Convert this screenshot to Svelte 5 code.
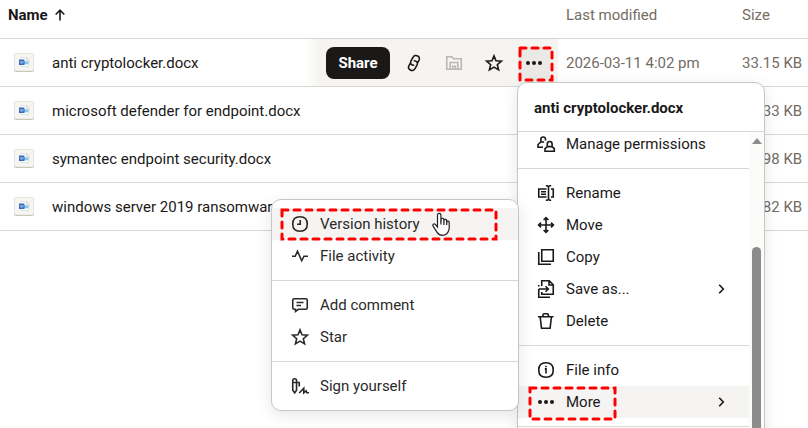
<script lang="ts">
  type Item = { icon: string; label: string; submenu?: boolean; active?: boolean };

  const files = [
    { name: "anti cryptolocker.docx", modified: "2026-03-11 4:02 pm", size: "33.15 KB", hovered: true },
    { name: "microsoft defender for endpoint.docx", modified: "", size: "34.33 KB" },
    { name: "symantec endpoint security.docx", modified: "", size: "32.98 KB" },
    { name: "windows server 2019 ransomware.docx", modified: "", size: "34.82 KB" },
  ];

  const menu: Item[][] = [
    [{ icon: "people", label: "Manage permissions" }],
    [
      { icon: "rename", label: "Rename" },
      { icon: "move", label: "Move" },
      { icon: "copy", label: "Copy" },
      { icon: "saveAs", label: "Save as...", submenu: true },
      { icon: "trash", label: "Delete" },
    ],
    [
      { icon: "info", label: "File info" },
      { icon: "dots", label: "More", submenu: true, active: true },
    ],
  ];

  const submenu: Item[][] = [
    [
      { icon: "clock", label: "Version history", active: true },
      { icon: "activity", label: "File activity" },
    ],
    [
      { icon: "comment", label: "Add comment" },
      { icon: "star", label: "Star" },
    ],
    [{ icon: "sign", label: "Sign yourself" }],
  ];

  const icons: Record<string, string> = {
    people:
      "M10 10H6.900V7.300a2.300 2.300 0 0 1 4.600 0V8.500M6.900 10 4 12.500v2.700h5M13.300 14.600v-2.700a2.400 2.400 0 0 1 4.800 0v2.700zM13.300 14.600 11 16.700v2.500h9.300v-2.500l-2.200-2.100",
    rename:
      "M12.500 8H4.750v8h7.750M17 8h2.250v8H17M7 10.700h5M7 13.300h5M11.800 4.750h1.500l1.200 1 1.200-1h1.500M11.800 19.250h1.500l1.200-1 1.200 1h1.500M14.500 5.750v12.500",
    move: "M12 4.8v14.4M4.8 12h14.4M9.6 7 12 4.6 14.4 7M9.6 17l2.4 2.4 2.4-2.4M7 9.6 4.6 12 7 14.4M17 9.6l2.4 2.4-2.4 2.4",
    copy: "M7.750 4.750h11.500v11.500H7.750zM4.750 7v12.250H17",
    saveAs:
      "M7.750 9V3.750h7.500l4 4v9.500H7.750V15M15 4v4h4M4.750 8v1.500M4.750 12v8.250H16M4.750 12h9M11.500 9.200l2.800 2.800-2.800 2.800",
    trash: "M4 7.750h15.500M9 7.500V6q0-1.250 1.200-1.250h3q1.200 0 1.200 1.250v1.500M6.200 8l1.300 11.250h8.600L17.400 8",
    info: "M12 4.750c5 0 7.250 2.250 7.250 7.250S17 19.250 12 19.250 4.750 17 4.750 12 7 4.750 12 4.750zM10.800 10.900H12v4.600M12 7.800v1.500",
    clock: "M12 4.750c5 0 7.250 2.250 7.250 7.250S17 19.250 12 19.250 4.750 17 4.750 12 7 4.750 12 4.750zM12.250 8v4.250H9",
    activity: "M4 12.250h3.200l2.300-5 4.200 9.500 2.300-4.500h4",
    comment:
      "M6.200 5.750h11.600q1.450 0 1.450 1.450v7.600q0 1.450-1.450 1.450h-7.300L7.500 18.500v-2.250H6.200q-1.450 0-1.450-1.450V7.200q0-1.450 1.450-1.450zM8.500 9.500h7M8.500 12.500h4.500",
    star: "m12 4.900 2 4.900 5.400.4-4.100 3.500 1.300 5.200-4.600-2.800-4.600 2.800 1.300-5.200-4.100-3.500 5.400-.4z",
    sign: "M4.750 8.500V6.600a1.900 1.900 0 0 1 3.800 0v9.600l-1.900 2.600-1.900-2.600zM4.750 8.500h6.500v4M11.200 19l4.600-4.800v4.600l2.300-2 .8 2H21",
    link: "M12.300 14.200c-3 .3-4.600-2-3.300-4.300l2-3.600c1-1.800 3-2.300 4.700-1.300s2.200 2.900 1.200 4.600l-1.500 2.600M11.700 9.800c3-.3 4.600 2 3.300 4.300l-2 3.600c-1 1.800-3 2.300-4.700 1.300s-2.200-2.900-1.200-4.600l1.500-2.600",
    folder: "M4.750 5.750h5.200l1.500 2h7.800v10.500H4.750zM8.200 18v-6.500h7.600V18M10.700 18v-2.700h2.600V18",
    chevron: "m10.200 7.800 4.100 4.200-4.100 4.200",
    arrow: "M12 17.500v-10M7.700 11.500 12 7.200l4.300 4.300",
  };
</script>

{#snippet icon(name: string)}
  <svg class="icon" viewBox="0 0 24 24" aria-hidden="true">
    {#if name === "dots"}
      <g class="solid">
        <circle cx="6" cy="12" r="2" />
        <circle cx="12" cy="12" r="2" />
        <circle cx="18" cy="12" r="2" />
      </g>
    {:else}
      <path d={icons[name]} />
    {/if}
  </svg>
{/snippet}

{#snippet groups(list: Item[][])}
  {#each list as group}
    <div class="group" role="group">
      {#each group as item}
        <button class="item" class:active={item.active} role="menuitem">
          {@render icon(item.icon)}
          <span class="label">{item.label}</span>
          {#if item.submenu}{@render icon("chevron")}{/if}
        </button>
      {/each}
    </div>
  {/each}
{/snippet}

{#snippet marker(name: string)}
  <svg class="marker {name}" aria-hidden="true"><rect width="100%" height="100%" /></svg>
{/snippet}

<main class="page">
  <table class="files">
    <thead>
      <tr>
        <th class="name"><button class="sort">Name {@render icon("arrow")}</button></th>
        <th class="modified">Last modified</th>
        <th class="size">Size</th>
      </tr>
    </thead>
    <tbody>
      {#each files as file}
        <tr>
          <td class="name">
            <div class="file">
              <svg class="thumb" viewBox="0 0 20 19" aria-hidden="true">
                <rect y="1" width="20" height="18" rx="2" fill="#c9c6c2" />
                <rect width="20" height="18" rx="2" fill="#e8e5e1" />
                <rect x="1" y="1" width="18" height="16.5" rx="1" fill="#f7f5f2" />
                <path d="M7 4.500h5.500L15 7v6.500H7z" fill="#fff" stroke="#d3d8df" stroke-width=".7" />
                <path d="M12.500 4.500V7H15" fill="none" stroke="#b9c3cf" stroke-width=".7" />
                <path d="M10 8.300h4.500v3H10z" fill="#8fc1ef" />
                <rect x="5" y="6.5" width="5.5" height="5.5" rx=".5" fill="#2f70b8" />
                <path d="m6.200 8 .8 2.500.8-2.300.8 2.300.7-2.500" fill="none" stroke="#b9d6f2" stroke-width=".6" />
              </svg>
              <a class="filename" href="#file">{file.name}</a>
              {#if file.hovered}
                <div class="actions">
                  <button class="share">Share</button>
                  <button class="tool" aria-label="Copy link">{@render icon("link")}</button>
                  <button class="tool" aria-label="Open folder" disabled>{@render icon("folder")}</button>
                  <button class="tool" aria-label="Star">{@render icon("star")}</button>
                  <button class="tool open" aria-label="More actions">
                    {@render icon("dots")}
                    {@render marker("on-tool")}
                  </button>
                </div>
              {/if}
            </div>
          </td>
          <td class="modified">{file.modified}</td>
          <td class="size">{file.size}</td>
        </tr>
      {/each}
    </tbody>
  </table>

  <div class="menu" role="menu">
    <h2 class="title">anti cryptolocker.docx</h2>
    <div class="scroll">
      <div class="entries">{@render groups(menu)}</div>
      <div class="scrollbar">
        <span class="up"></span>
        <span class="handle"></span>
      </div>
    </div>
    {@render marker("on-more")}
  </div>

  <div class="submenu" role="menu">
    {@render groups(submenu)}
    {@render marker("on-history")}
    <svg class="cursor" viewBox="0 0 18 25" aria-hidden="true">
      <path
        d="M5.500 15V3a1.700 1.700 0 0 1 3.400 0v6.500-1.700a1.500 1.500 0 0 1 3 .2v2-1.300a1.400 1.400 0 0 1 2.800.3v2-1a1.300 1.300 0 0 1 2.500.4v5.600c0 2-.7 3.300-1.500 4.600-.8 1.600-2.400 2.700-5 2.700s-4.300-1-5.600-3l-4-6.200c-.9-1.500.8-2.800 2.200-1.700z"
      />
      <path d="M8.900 8.500v4M11.900 9.500v3.500M14.700 10.500V13" />
    </svg>
  </div>
</main>

<style>
  :global(body) {
    margin: 0;
    background: #fff;
  }

  .page {
    position: relative;
    min-height: 100vh;
    overflow: hidden;
    color: #1a1918;
    font-family: Roboto, "Liberation Sans", sans-serif;
    font-size: 15px;
    line-height: 20px;
  }

  button {
    border: 0;
    padding: 0;
    background: none;
    color: inherit;
    font: inherit;
    cursor: pointer;
  }

  .icon {
    flex: none;
    width: 24px;
    height: 24px;
    fill: none;
    stroke: currentColor;
    stroke-width: 1.6;
  }

  .solid {
    fill: currentColor;
    stroke: none;
  }

  .files {
    width: 100%;
    table-layout: fixed;
    border-collapse: separate;
    border-spacing: 0;
  }

  th,
  td {
    box-sizing: border-box;
    height: 48px;
    padding: 0 8px;
    border-bottom: 1px solid #d8d6d4;
    color: #736c64;
    font-weight: 400;
    text-align: left;
    white-space: nowrap;
  }

  th {
    height: 39px;
    padding-bottom: 8px;
  }

  td.name {
    padding: 0;
  }

  .modified {
    width: 176px;
  }

  .size {
    width: 74px;
  }

  .sort {
    display: flex;
    align-items: center;
    color: #1a1918;
    font-weight: 700;
  }

  .file {
    display: flex;
    align-items: center;
    height: 47px;
    padding-left: 14px;
  }

  .thumb {
    width: 20px;
    height: 19px;
    margin-right: 18px;
  }

  .filename {
    color: #1a1918;
    text-decoration: none;
  }

  .actions {
    display: flex;
    align-items: center;
    gap: 8px;
    align-self: stretch;
    margin-left: auto;
    padding: 0 8px 0 20px;
    background: linear-gradient(90deg, transparent, #f5f4f1 12px);
  }

  .share {
    width: 64px;
    height: 32px;
    border-radius: 8px;
    background: #1a1918;
    color: #fff;
    font-weight: 700;
  }

  .tool {
    position: relative;
    display: flex;
    align-items: center;
    justify-content: center;
    width: 32px;
    height: 32px;
    color: #1a1918;
  }

  .tool:disabled {
    color: #bbb8b3;
  }

  .tool.open {
    background: #ebe9e6;
  }

  .menu,
  .submenu {
    position: absolute;
    box-sizing: border-box;
    width: 248px;
    border: 1px solid #c8c6c4;
    border-radius: 10px;
    background: #fff;
    box-shadow: 0 4px 16px rgba(0, 0, 0, 0.1);
  }

  .menu {
    top: 82px;
    right: 43px;
    bottom: -24px;
    display: flex;
    flex-direction: column;
  }

  .submenu {
    top: 199px;
    right: 289px;
    padding: 8px 0;
    color: #2b2a29;
  }

  .title {
    margin: 0;
    padding: 15px 16px 13px;
    border-bottom: 1px solid #d8d6d4;
    font-size: 15px;
    font-weight: 700;
    line-height: 20px;
  }

  .scroll {
    display: flex;
    flex: 1;
    min-height: 0;
    overflow: hidden;
  }

  /* the list is scrolled down a little under the title */
  .entries {
    flex: 1;
    margin-top: -4px;
  }

  .group + .group {
    margin-top: 8px;
    padding-top: 8px;
    border-top: 1px solid #d8d6d4;
  }

  .entries .group:last-child::after {
    content: "";
    display: block;
    margin-top: 8px;
    border-top: 1px solid #d8d6d4;
  }

  .item {
    display: flex;
    align-items: center;
    gap: 8px;
    width: 100%;
    height: 32px;
    padding: 0 16px;
    text-align: left;
  }

  .item.active {
    background: #f5f4f3;
  }

  .label {
    flex: 1;
  }

  .scrollbar {
    display: flex;
    flex-direction: column;
    align-items: center;
    width: 15px;
    padding-top: 6px;
    background: #fbfbfa;
  }

  .up {
    border: 5px solid transparent;
    border-top: 0;
    border-bottom: 6px solid #8b8b8b;
  }

  .handle {
    flex: 1;
    width: 9px;
    margin-top: 103px;
    border-radius: 5px 5px 0 0;
    background: #8b8b8b;
  }

  .marker {
    position: absolute;
    overflow: visible;
    fill: none;
    stroke: #f00;
    stroke-width: 3;
    stroke-dasharray: 6 6;
    stroke-linecap: round;
    pointer-events: none;
  }

  .on-tool {
    top: 1px;
    left: 2px;
    width: 32px;
    height: 32px;
  }

  .on-more {
    top: 305px;
    left: 12px;
    width: 85px;
    height: 31px;
  }

  .on-history {
    top: 10px;
    left: 10px;
    width: 214px;
    height: 29px;
  }

  .cursor {
    position: absolute;
    top: 12px;
    left: 160px;
    width: 18px;
    height: 25px;
    fill: #fff;
    stroke: #222;
    stroke-width: 1.2;
  }
</style>
